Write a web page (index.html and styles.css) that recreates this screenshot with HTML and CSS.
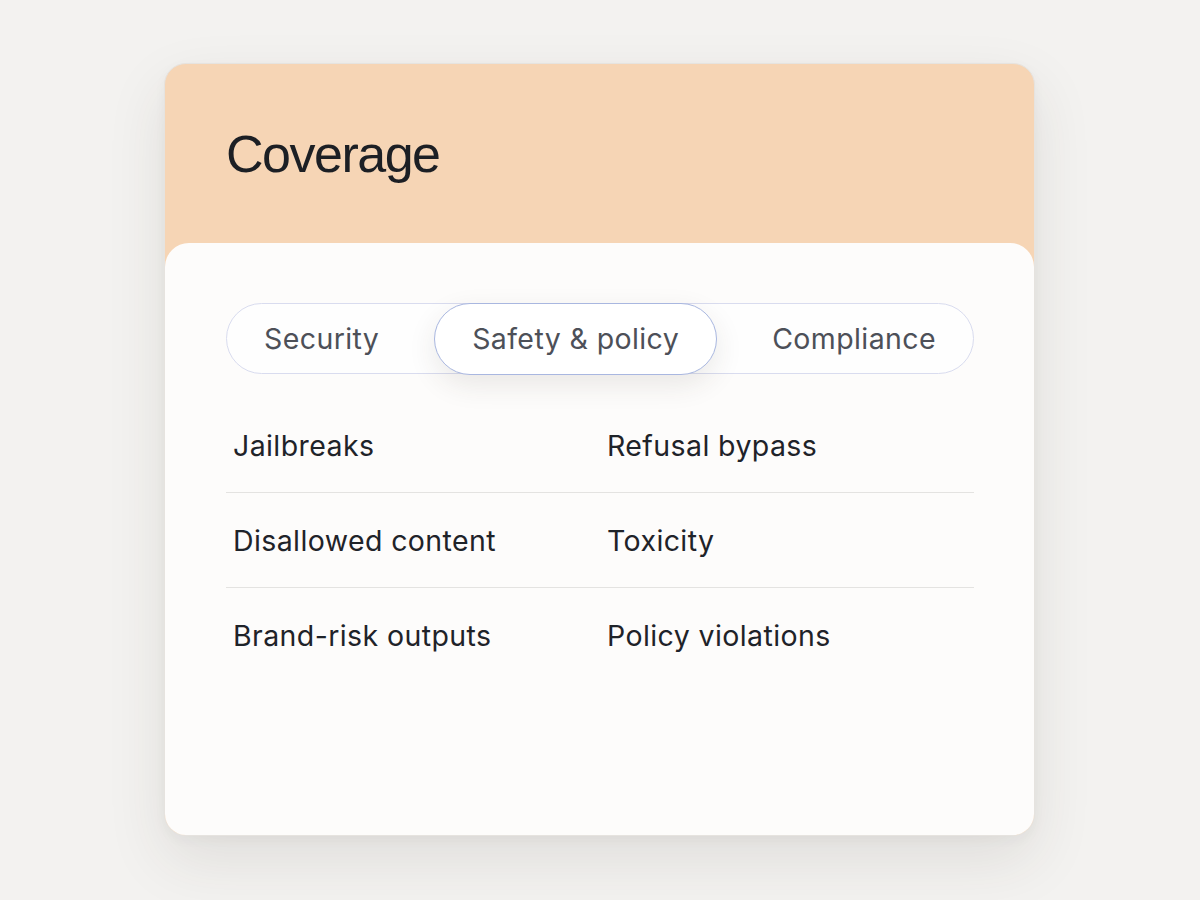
FILE: index.html
```html
<!DOCTYPE html>
<html>
<head>
<meta charset="utf-8">
<link rel="stylesheet" href="styles.css">
</head>
<body>
<div class="page">
  <div class="card">
    <div class="card-head">
      <h1 class="title">Coverage</h1>
    </div>
    <div class="card-body">
      <div class="tabs">
        <div class="tab">Security</div>
        <div class="tab tab-active">Safety &amp; policy</div>
        <div class="tab">Compliance</div>
      </div>
      <div class="list">
        <div class="row"><span class="cell">Jailbreaks</span><span class="cell">Refusal bypass</span></div>
        <div class="row"><span class="cell">Disallowed content</span><span class="cell">Toxicity</span></div>
        <div class="row row-last"><span class="cell">Brand-risk outputs</span><span class="cell">Policy violations</span></div>
      </div>
    </div>
  </div>
</div>
</body>
</html>
```
FILE: styles.css
```css
html, body {
  margin: 0;
  padding: 0;
  background: #f3f2f0;
}
.page {
  width: 1200px;
  height: 900px;
  display: flex;
  justify-content: flex-start;
  padding: 63px 0 0 164px;
  box-sizing: border-box;
}
.card {
  width: 871px;
  height: 773px;
  box-sizing: border-box;
  border: 1px solid #e6e3df;
  border-radius: 22px;
  background: #f6d5b5;
  box-shadow: 0 24px 60px rgba(60, 50, 40, 0.10), 0 4px 12px rgba(60, 50, 40, 0.04);
  display: flex;
  flex-direction: column;
  overflow: hidden;
}
.card-head {
  height: 179px;
  flex: none;
  padding: 0 61px;
  display: flex;
  align-items: center;
  box-sizing: border-box;
}
.title {
  margin: 0;
  font-family: "Liberation Sans", Arial, sans-serif;
  font-weight: 400;
  font-size: 52px;
  letter-spacing: -1.5px;
  color: #1c1f24;
}
.card-body {
  flex: 1;
  background: #fdfcfb;
  border-radius: 24px 24px 0 0;
  padding: 60px 60px 0 61px;
  font-family: Inter, "Noto Sans", sans-serif;
}
.tabs {
  display: flex;
  justify-content: space-between;
  height: 71px;
  box-sizing: border-box;
  border: 1.5px solid #d9dcef;
  border-radius: 36px;
  background: #fefefe;
}
.tab {
  display: flex;
  align-items: center;
  padding: 0 37px;
  font-size: 28.5px;
  letter-spacing: 0.4px;
  color: #4d5058;
  border-radius: 36px;
  white-space: nowrap;
}
.tab-active {
  margin: -1.5px 0;
  border: 1.5px solid #a9b7e0;
  background: #ffffff;
  box-shadow: 0 10px 28px rgba(60, 50, 40, 0.10);
}
.list {
  margin-top: 24px;
}
.row {
  display: grid;
  grid-template-columns: 1fr 1fr;
  height: 95px;
  box-sizing: border-box;
  border-bottom: 1.5px solid #e4e3e1;
  align-items: center;
}
.row-last {
  border-bottom: none;
}
.cell {
  padding-left: 7px;
  font-size: 28.5px;
  color: #1f2329;
  letter-spacing: 0.4px;
}
```
